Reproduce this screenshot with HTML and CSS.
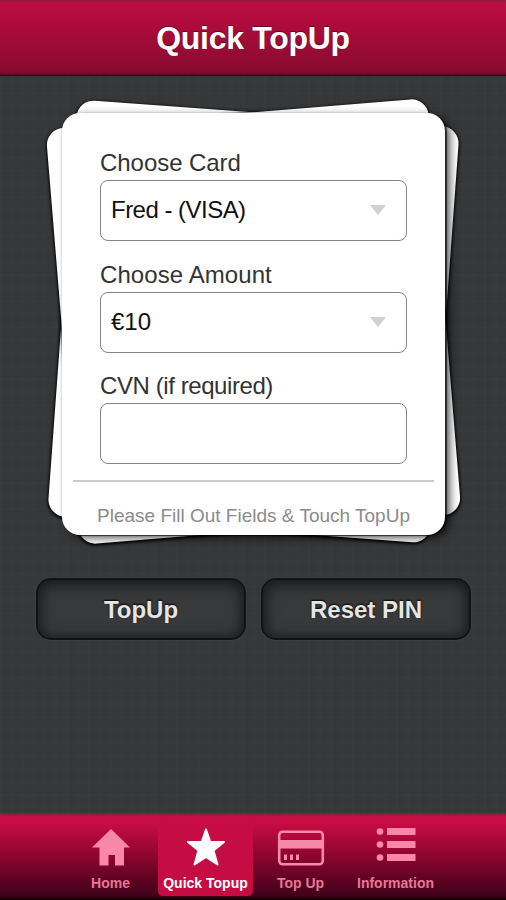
FILE: index.html
```html
<!DOCTYPE html>
<html lang="en">
<head>
<meta charset="utf-8">
<title>Quick TopUp</title>
<link rel="stylesheet" href="styles.css">
</head>
<body>
<header class="header"><h1>Quick TopUp</h1></header>
<main class="content">
  <div class="stack">
    <section class="card">
      <div class="fields">
        <div class="label">Choose Card</div>
        <div class="field"><span class="fred">Fred - (VISA)</span><i class="arrow"></i></div>
        <div class="label amount">Choose Amount</div>
        <div class="field"><span>€10</span><i class="arrow"></i></div>
        <div class="label cvn">CVN (if required)</div>
        <div class="field"></div>
      </div>
      <p class="hint"><span>Please Fill Out Fields &amp; Touch TopUp</span></p>
    </section>
  </div>
  <div class="buttons">
    <div class="button">TopUp</div>
    <div class="button">Reset PIN</div>
  </div>
</main>
<nav class="tabs">
  <div class="tab">
    <svg width="40" height="44" viewBox="0 0 40 44"><path d="M20 5 39 23.500h-6V41.500h-9V31h-6.500v10.500h-9V23.500H1z"/></svg>
    <span>Home</span>
  </div>
  <div class="tab active">
    <svg width="40" height="44" viewBox="0 0 40 44"><path d="M20 5.500l4.300 12.500H38L27.500 26.500 31.500 40.500 20 33 8.500 40.500 12.500 26.500 2 18H15.700z" stroke="#fff" stroke-width="2" stroke-linejoin="round"/></svg>
    <span>Quick Topup</span>
  </div>
  <div class="tab">
    <svg width="48" height="44" viewBox="0 0 48 44"><rect x="2.200" y="7.700" width="43.600" height="32.600" rx="3.500" fill="none" stroke="#f987aa" stroke-width="2.600"/><path d="M2 16h44v8.500H2zM7 30.500h3v5.500H7zM13 30.500h3v5.500H13zM19 30.500H22v5.500h-3z"/></svg>
    <span>Top Up</span>
  </div>
  <div class="tab">
    <svg width="40" height="44" viewBox="0 0 40 44"><circle cx="4" cy="7.500" r="3.300"/><circle cx="4" cy="20.500" r="3.300"/><circle cx="4" cy="33.500" r="3.300"/><path d="M11 4h28.500v7H11zM11 17h28.500v7H11zM11 30h28.500v7H11z"/></svg>
    <span>Information</span>
  </div>
</nav>
</body>
</html>
```
FILE: styles.css
```css
* { box-sizing: border-box; }
body {
  margin: 0;
  height: 900px;
  display: flex;
  flex-direction: column;
  overflow: hidden;
  font-family: "Liberation Sans", Arial, sans-serif;
  background:
    repeating-linear-gradient(90deg, rgba(255,255,255,.006) 0 2px, transparent 2px 5px, rgba(0,0,0,.018) 5px 6px, transparent 6px 11px),
    repeating-linear-gradient(0deg, rgba(255,255,255,.006) 0 2px, transparent 2px 7px, rgba(0,0,0,.018) 7px 8px, transparent 8px 13px),
    #363738;
}
.header {
  height: 76px;
  flex: none;
  display: flex;
  align-items: center;
  justify-content: center;
  background: linear-gradient(#8f1c3c 0, #bb0d40 3px, #b50c3e 15px, #870a30 73px, #4d071d 75px, #24080f 76px);
}
.header h1 {
  margin: 0;
  font-size: 32px;
  line-height: 36px;
  letter-spacing: -.3px;
  color: #fff;
  text-shadow: 0 -1px 1px rgba(0,0,0,.4);
}
.content { flex: 1; padding: 37px 35px 0; }
.stack {
  position: relative;
  width: 383px;
  height: 422px;
  margin-left: 27px;
}
.stack::before, .stack::after {
  content: "";
  position: absolute;
  left: 0;
  top: 0;
  width: 383px;
  height: 417px;
  border-radius: 17px;
  background: #fff;
  box-shadow: 0 1px 3px 1px #000;
}
.stack::before { transform: rotate(4.200deg); }
.stack::after { transform: rotate(-4.700deg); }
.card {
  position: relative;
  z-index: 1;
  height: 422px;
  border-radius: 18px;
  background: #fff;
  box-shadow: 2px 1px 1px rgba(0,0,0,.65), 5px 3px 8px rgba(0,0,0,.65), 0 0 2px rgba(0,0,0,.2);
  padding: 35px 11px 0;
}
.fields { padding: 0 27px; }
.label {
  height: 32px;
  line-height: 29px;
  font-size: 24px;
  letter-spacing: -.05px;
  color: #333;
  white-space: nowrap;
}
.amount { letter-spacing: .08px; }
.cvn { letter-spacing: -.42px; }
.field {
  height: 61px;
  margin-bottom: 18.500px;
  border: 1.500px solid #858585;
  border-radius: 8px;
  display: flex;
  align-items: center;
  justify-content: space-between;
  padding: 0 20px 1px 10px;
  font-size: 24px;
  color: #111;
}
.fred { letter-spacing: -.52px; }
.arrow {
  border: solid transparent;
  border-width: 10px 8px 0;
  border-top-color: #d0d0d0;
}
.hint {
  margin: 0;
  border-top: 2px solid #ccc;
  margin-top: -3px;
  padding-top: 21px;
  text-align: center;
  font-size: 19px;
  line-height: 26px;
  color: #8b8b8b;
  white-space: nowrap;
}
.buttons { display: flex; gap: 15px; margin-top: 43px; padding-left: 1px; }
.button {
  width: 210px;
  height: 62px;
  border-radius: 15px;
  border: 2px solid #111213;
  background: #38393a;
  box-shadow: inset 0 2px 13px 3px rgba(0,0,0,.58), 0 0 1px 1px rgba(255,255,255,.035);
  display: flex;
  align-items: center;
  justify-content: center;
  padding-top: 2px;
  color: #e5e5e5;
  font-size: 24px;
  font-weight: bold;
  text-shadow: 0 -1px 2px #000;
}
.tabs {
  flex: none;
  height: 87px;
  padding: 7px 63px 4px;
  display: grid;
  grid-template-columns: repeat(4, 95px);
  background: linear-gradient(#782039 0, #c70e44 4px, #c60d43 10px, #a40836 30px, #76042a 55px, #3e0219 83px, #120207 86px);
}
.tab {
  display: flex;
  flex-direction: column;
  align-items: center;
  color: #e67795;
  font-size: 14px;
  font-weight: bold;
  line-height: 17px;
  white-space: nowrap;
  border-radius: 5px;
  padding-top: 4px;
}
.tab svg { fill: #f987aa; display: block; margin-bottom: 7px; }
.active { background: #c50d43; color: #fff; }
.active svg { fill: #fff; }
```
